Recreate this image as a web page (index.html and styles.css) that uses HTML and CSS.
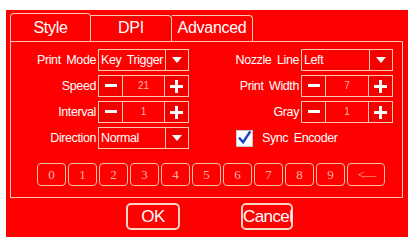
FILE: index.html
```html
<!DOCTYPE html>
<html>
<head>
<meta charset="utf-8">
<link rel="stylesheet" href="styles.css">
</head>
<body>
<div class="screen">
  <div class="tabs">
    <div class="tab active">Style</div>
    <div class="tab">DPI</div>
    <div class="tab">Advanced</div>
  </div>
  <div class="panel">
    <div class="grid">
      <div class="label">Print Mode</div>
      <div class="combo"><span class="combo-text">Key Trigger</span><span class="arrow"><svg width="10" height="6" viewBox="0 0 10 6"><polygon points="0,0 10,0 5,6" fill="#fff"/></svg></span></div>
      <div class="label">Nozzle Line</div>
      <div class="combo"><span class="combo-text">Left</span><span class="arrow"><svg width="10" height="6" viewBox="0 0 10 6"><polygon points="0,0 10,0 5,6" fill="#fff"/></svg></span></div>

      <div class="label">Speed</div>
      <div class="spin"><span class="btn minus"><svg width="12" height="4" viewBox="0 0 12 4"><rect x="0" y="0" width="12" height="3" fill="#fff"/></svg></span><span class="val">21</span><span class="btn plus"><svg width="13" height="13" viewBox="0 0 13 13"><rect x="0" y="5" width="13" height="3" fill="#fff"/><rect x="5" y="0" width="3" height="13" fill="#fff"/></svg></span></div>
      <div class="label">Print Width</div>
      <div class="spin"><span class="btn minus"><svg width="12" height="4" viewBox="0 0 12 4"><rect x="0" y="0" width="12" height="3" fill="#fff"/></svg></span><span class="val">7</span><span class="btn plus"><svg width="13" height="13" viewBox="0 0 13 13"><rect x="0" y="5" width="13" height="3" fill="#fff"/><rect x="5" y="0" width="3" height="13" fill="#fff"/></svg></span></div>

      <div class="label">Interval</div>
      <div class="spin"><span class="btn minus"><svg width="12" height="4" viewBox="0 0 12 4"><rect x="0" y="0" width="12" height="3" fill="#fff"/></svg></span><span class="val">1</span><span class="btn plus"><svg width="13" height="13" viewBox="0 0 13 13"><rect x="0" y="5" width="13" height="3" fill="#fff"/><rect x="5" y="0" width="3" height="13" fill="#fff"/></svg></span></div>
      <div class="label">Gray</div>
      <div class="spin"><span class="btn minus"><svg width="12" height="4" viewBox="0 0 12 4"><rect x="0" y="0" width="12" height="3" fill="#fff"/></svg></span><span class="val">1</span><span class="btn plus"><svg width="13" height="13" viewBox="0 0 13 13"><rect x="0" y="5" width="13" height="3" fill="#fff"/><rect x="5" y="0" width="3" height="13" fill="#fff"/></svg></span></div>

      <div class="label">Direction</div>
      <div class="combo"><span class="combo-text">Normal</span><span class="arrow"><svg width="10" height="6" viewBox="0 0 10 6"><polygon points="0,0 10,0 5,6" fill="#fff"/></svg></span></div>
      <div class="check-cell">
        <span class="checkbox"><svg width="16" height="16" viewBox="0 0 16 16"><path d="M3 8.5 L6.5 12.5 L13.5 2" fill="none" stroke="#1c3fc4" stroke-width="2.6" stroke-linecap="square"/></svg></span>
        <span class="check-label">Sync Encoder</span>
      </div>
    </div>
    <div class="keys">
      <span class="key">0</span><span class="key">1</span><span class="key">2</span><span class="key">3</span><span class="key">4</span><span class="key">5</span><span class="key">6</span><span class="key">7</span><span class="key">8</span><span class="key">9</span><span class="key back">&lt;&mdash;</span>
    </div>
  </div>
  <div class="actions">
    <span class="action ok">OK</span>
    <span class="action cancel">Cancel</span>
  </div>
</div>
</body>
</html>
```
FILE: styles.css
```css
html, body {
  margin: 0;
  padding: 0;
  background: #ffffff;
}
body {
  font-family: "Liberation Sans", Arial, sans-serif;
  color: #ffffff;
}
.screen {
  margin: 10px 0 0 6px;
  width: 402px;
  height: 227px;
  background: #ff0000;
  box-sizing: border-box;
  padding: 3px 0 0 4px;
}
.tabs {
  display: flex;
  align-items: flex-end;
  height: 28px;
}
.tab {
  box-sizing: border-box;
  width: 81px;
  height: 26px;
  border: 1px solid #f9c6b4;
  border-bottom: none;
  border-left: none;
  border-radius: 0 4px 0 0;
  font-size: 16px;
  line-height: 24px;
  text-align: center;
  letter-spacing: -0.3px;
}
.tab.active {
  height: 28px;
  line-height: 27px;
  border-left: 1px solid #f9c6b4;
  border-radius: 4px 4px 0 0;
}
.panel {
  box-sizing: border-box;
  width: 393px;
  height: 157px;
  border: 1px solid #f9c6b4;
  padding: 7px 9px 0 0;
}
.grid {
  display: grid;
  grid-template-columns: 85px 91px 1fr 92px;
  grid-auto-rows: 22px;
  column-gap: 2px;
  row-gap: 4px;
}
.label {
  font-size: 12.5px;
  letter-spacing: -0.4px;
  text-align: right;
  line-height: 22px;
  word-spacing: 2.5px;
  white-space: nowrap;
}
.combo, .spin {
  box-sizing: border-box;
  border: 1px solid #f9c6b4;
  display: flex;
  height: 22px;
}
.combo-text {
  flex: 1;
  font-size: 12.5px;
  letter-spacing: -0.4px;
  line-height: 20px;
  padding-left: 2px;
  word-spacing: 2.5px;
  white-space: nowrap;
  overflow: hidden;
}
.arrow {
  width: 22px;
  border-left: 1px solid #f9c6b4;
  display: flex;
  align-items: center;
  justify-content: center;
  background: #f20000;
}
.btn {
  width: 23px;
  display: flex;
  align-items: center;
  justify-content: center;
  background: #f20000;
}
.minus { border-right: 1px solid #f9c6b4; }
.plus { border-left: 1px solid #f9c6b4; }
.val {
  flex: 1;
  text-align: center;
  font-size: 10px;
  line-height: 20px;
  color: #ffb8a8;
}
.check-cell {
  grid-column: 3 / 5;
  display: flex;
  align-items: center;
  padding-left: 45px;
}
.checkbox {
  box-sizing: border-box;
  width: 17px;
  height: 17px;
  background: #ffffff;
  border: 1px solid #c8c8d0;
  display: flex;
  align-items: center;
  justify-content: center;
}
.check-label {
  margin-left: 9px;
  font-size: 12.5px;
  letter-spacing: -0.4px;
  word-spacing: 2.5px;
}
.keys {
  display: flex;
  gap: 2px;
  margin: 14px 0 0 26px;
}
.key {
  box-sizing: border-box;
  width: 29px;
  height: 23px;
  border: 1px solid #f7c2a8;
  border-radius: 4px;
  font-family: "Liberation Serif", "Times New Roman", serif;
  font-size: 13px;
  line-height: 21px;
  text-align: center;
  color: #f9b7a0;
}
.key.back {
  width: 38px;
  letter-spacing: -2px;
}
.actions {
  display: flex;
  margin: 5px 0 0 116px;
  gap: 61px;
}
.action {
  box-sizing: border-box;
  height: 27px;
  border: 2px solid #f9d4c4;
  border-radius: 5px;
  font-size: 17px;
  letter-spacing: -0.6px;
  line-height: 23px;
  text-align: center;
}
.ok { width: 54px; }
.cancel { width: 52px; }
```
